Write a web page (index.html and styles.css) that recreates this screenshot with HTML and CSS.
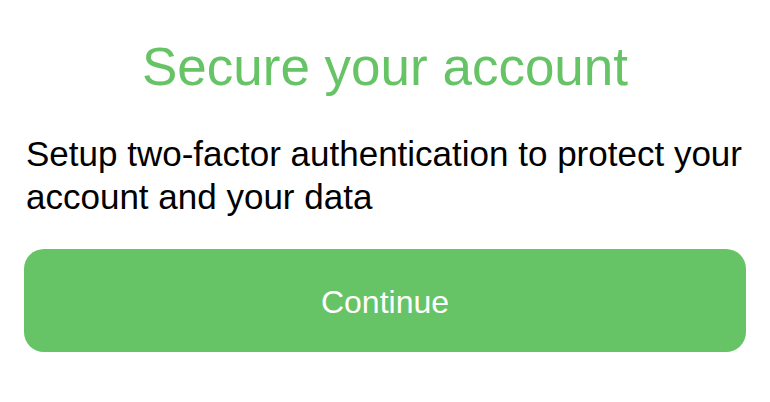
FILE: index.html
```html
<!DOCTYPE html>
<html>
<head>
<meta charset="utf-8">
<link rel="stylesheet" href="styles.css">
</head>
<body>
<main class="screen">
  <h1 class="title">Secure your account</h1>
  <p class="desc">Setup two-factor authentication to protect your account and your data</p>
  <button class="continue">Continue</button>
</main>
</body>
</html>
```
FILE: styles.css
```css
html, body {
  margin: 0;
  padding: 0;
  background: #ffffff;
}
.screen {
  display: flex;
  flex-direction: column;
  padding: 35px 24px 0 24px;
  font-family: "Liberation Sans", Arial, sans-serif;
}
.title {
  margin: 0;
  text-align: center;
  color: #66c466;
  font-size: 53px;
  font-weight: 400;
  line-height: 64px;
}
.desc {
  margin: 33px 0 0 2px;
  color: #000000;
  font-size: 35px;
  line-height: 43px;
}
.continue {
  margin-top: 31px;
  height: 103px;
  border: none;
  border-radius: 20px;
  background: #66c466;
  color: #ffffff;
  font-family: "Liberation Sans", Arial, sans-serif;
  font-size: 32px;
  padding: 3px 0 0 0;
}
```
